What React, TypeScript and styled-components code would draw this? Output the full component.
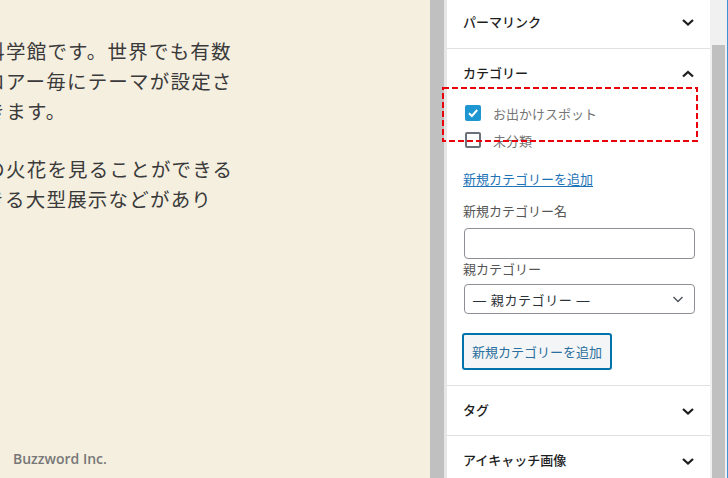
import styled, { createGlobalStyle } from 'styled-components';

const JP = `'Noto Sans CJK JP', 'Noto Sans', sans-serif`;

const GlobalStyle = createGlobalStyle`
	html, body {
		margin: 0;
		padding: 0;
		overflow: hidden;
	}
`;

const ARTICLE = [
	['お台場にある国立の科学館です。世界でも有数', 'の展示を持ち、各フロアー毎にテーマが設定さ', 'れ、自由に見学ができます。'],
	['高電圧実験では本物の火花を見ることができる', 'ショーや、体験ができる大型展示などがあり'],
];

function Chevron({ up = false }: { up?: boolean }) {
	return (
		<svg width="24" height="24" viewBox="0 0 24 24">
			<polyline
				points={up ? '7,14.5 12,10 17,14.5' : '7,10 12,14.5 17,10'}
				fill="none"
				stroke="#1e1e1e"
				strokeWidth="2.3"
			/>
		</svg>
	);
}

function Check() {
	return (
		<svg width="12" height="12" viewBox="0 0 12 12">
			<polyline points="2,6.2 4.9,9 10.2,3" fill="none" stroke="#fff" strokeWidth="2" />
		</svg>
	);
}

export default function App() {
	return (
		<>
			<GlobalStyle />
			<Screen>
				<Editor>
					<Article>
						{ARTICLE.map((para, p) => (
							<Paragraph key={p}>
								{para.map((line, i) => (
									<Line key={i}>{line}</Line>
								))}
							</Paragraph>
						))}
					</Article>
					<Footer>Buzzword Inc.</Footer>
				</Editor>
				<Divider />
				<Sidebar>
					<PanelHeader $first>
						<PanelTitle>パーマリンク</PanelTitle>
						<Chevron />
					</PanelHeader>
					<PanelHeader>
						<PanelTitle>カテゴリー</PanelTitle>
						<Chevron up />
					</PanelHeader>
					<PanelBody>
						<CheckList>
							<CheckRow>
								<CheckBox $checked>
									<Check />
								</CheckBox>
								<CheckLabel>お出かけスポット</CheckLabel>
							</CheckRow>
							<CheckRow>
								<CheckBox />
								<CheckLabel>未分類</CheckLabel>
							</CheckRow>
						</CheckList>
						<AddLink href="#">新規カテゴリーを追加</AddLink>
						<FieldLabel $gap={12}>新規カテゴリー名</FieldLabel>
						<TextInput />
						<FieldLabel $gap={0}>親カテゴリー</FieldLabel>
						<Select>
							<span>— 親カテゴリー —</span>
							<svg width="16" height="16" viewBox="0 0 16 16">
								<polyline points="3.5,6 8,10.5 12.5,6" fill="none" stroke="#50575e" strokeWidth="1.5" />
							</svg>
						</Select>
						<AddButton>新規カテゴリーを追加</AddButton>
					</PanelBody>
					<PanelHeader>
						<PanelTitle>タグ</PanelTitle>
						<Chevron />
					</PanelHeader>
					<PanelHeader>
						<PanelTitle>アイキャッチ画像</PanelTitle>
						<Chevron />
					</PanelHeader>
				</Sidebar>
				<Scrollbar>
					<Thumb />
				</Scrollbar>
				<Highlight width="256" height="55" viewBox="0 0 256 55">
					<rect x="1" y="1" width="254" height="53" fill="none" stroke="#e8000b" strokeWidth="2" strokeDasharray="6 3" />
				</Highlight>
			</Screen>
		</>
	);
}

const Screen = styled.div`
	position: relative;
	display: flex;
	width: 728px;
	height: 478px;
	overflow: hidden;
	background: #fff;
`;

const Editor = styled.main`
	width: 430px;
	flex-shrink: 0;
	display: flex;
	flex-direction: column;
	justify-content: space-between;
	background: #f5efe0;
	overflow: hidden;
`;

const Article = styled.article`
	padding-top: 36px;
	margin-left: -201px;
	font-family: ${JP};
	font-size: 19.5px;
	letter-spacing: 1.2px;
	line-height: 30px;
	color: #3a3a3a;
`;

const Paragraph = styled.p`
	margin: 0 0 28px;
`;

const Line = styled.span`
	display: block;
	white-space: nowrap;
`;

const Footer = styled.footer`
	padding: 0 0 10px 13px;
	font-family: 'Open Sans', sans-serif;
	font-size: 14px;
	font-weight: 600;
	color: #777;
`;

const Divider = styled.div`
	width: 14px;
	flex-shrink: 0;
	background: #c0c0c0;
	border-right: 3px solid #e6e6e6;
`;

const Sidebar = styled.aside`
	width: 263px;
	flex-shrink: 0;
	display: flex;
	flex-direction: column;
	background: #fff;
	font-family: ${JP};
`;

const PanelHeader = styled.div<{ $first?: boolean }>`
	height: 50px;
	flex-shrink: 0;
	display: flex;
	align-items: center;
	justify-content: space-between;
	padding: 0 10px 0 16px;
	margin-top: ${(p) => (p.$first ? '-3px' : '0')};
	border-top: ${(p) => (p.$first ? 'none' : '1px solid #e0e0e0')};
	box-sizing: ${(p) => (p.$first ? 'content-box' : 'border-box')};
	padding-bottom: ${(p) => (p.$first ? '1px' : '0')};
`;

const PanelTitle = styled.span`
	font-size: 13px;
	font-weight: 500;
	color: #1e1e1e;
	margin-top: -2px;
`;

const PanelBody = styled.div`
	display: flex;
	flex-direction: column;
	align-items: flex-start;
	padding: 3px 16px 15px;
`;

const CheckList = styled.div`
	display: flex;
	flex-direction: column;
	gap: 3px;
`;

const CheckRow = styled.label`
	display: flex;
	align-items: center;
	height: 24px;
	padding-left: 2px;
`;

const CheckBox = styled.span<{ $checked?: boolean }>`
	box-sizing: border-box;
	width: 16px;
	height: 16px;
	display: flex;
	align-items: center;
	justify-content: center;
	border-radius: 2px;
	background: ${(p) => (p.$checked ? '#1e96d2' : '#fff')};
	border: ${(p) => (p.$checked ? 'none' : '2px solid #6b7178')};
`;

const CheckLabel = styled.span`
	margin-left: 12px;
	font-size: 13px;
	color: #757575;
`;

const AddLink = styled.a`
	margin-top: 17px;
	line-height: 20px;
	font-size: 13px;
	color: #1f74b8;
	text-decoration: underline;
	text-underline-offset: 2px;
`;

const FieldLabel = styled.span<{ $gap: number }>`
	margin-top: ${(p) => p.$gap}px;
	line-height: 20px;
	font-size: 13px;
	color: #555;
`;

const TextInput = styled.input`
	box-sizing: border-box;
	margin-top: 7px;
	margin-left: 1px;
	width: 231px;
	height: 31px;
	border: 1px solid #8c8f94;
	border-radius: 4px;
	background: #fff;
`;

const Select = styled.div`
	box-sizing: border-box;
	margin-top: 5px;
	margin-left: 1px;
	width: 231px;
	height: 30px;
	display: flex;
	align-items: center;
	justify-content: space-between;
	padding: 0 8px 0 8px;
	border: 1px solid #8c8f94;
	border-radius: 4px;
	font-family: 'Liberation Sans', ${JP};
	font-size: 13px;
	letter-spacing: 0.6px;
	color: #2c3338;
`;

const AddButton = styled.button`
	box-sizing: border-box;
	margin-top: 19px;
	margin-left: -1px;
	width: 150px;
	height: 37px;
	border: 2px solid #0073aa;
	border-radius: 3px;
	background: #f3f5f6;
	font-family: ${JP};
	font-size: 13px;
	color: #2a6f9d;
	padding: 0;
`;

const Scrollbar = styled.div`
	width: 17px;
	flex-shrink: 0;
	display: flex;
	justify-content: center;
	background: #f0f0f0;
	border-right: 1px solid #3c94d2;
`;

const Thumb = styled.div`
	width: 13px;
	margin-top: 45px;
	background: #c0c0c0;
`;

const Highlight = styled.svg`
	position: absolute;
	left: 442px;
	top: 87px;
`;
